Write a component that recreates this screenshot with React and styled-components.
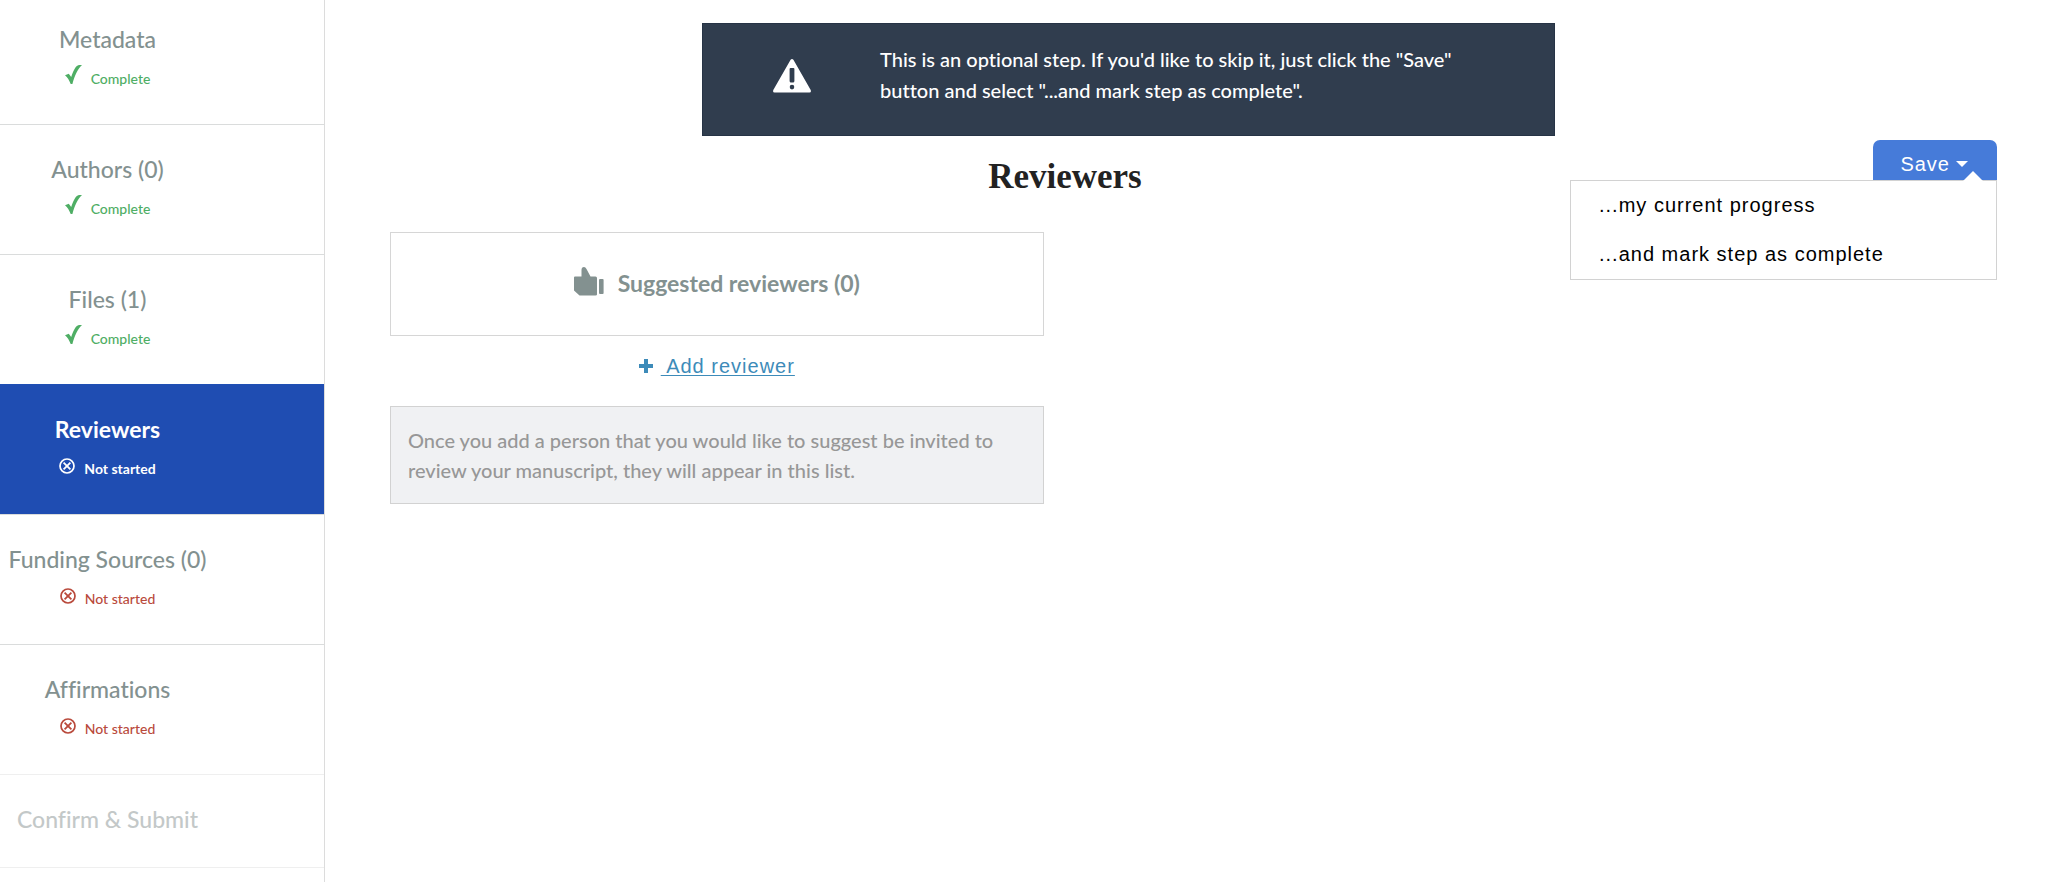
import React, { useState } from 'react'
import styled, { createGlobalStyle, css } from 'styled-components'

/* start setting styled-components */

const GlobalStyle = createGlobalStyle`
    * {
        box-sizing: border-box;
    }
    body {
        margin: 0;
        background-color: #fff;
        color: #222;
        font-family: Lato, 'Open Sans', sans-serif;
        font-variant-ligatures: none;
    }
    ul {
        list-style: none;
        margin: 0;
        padding: 0;
    }
    svg {
        flex-shrink: 0;
        fill: currentColor;
    }
`
const Page = styled.div`
    display: flex;
    min-height: 100vh;
`
const Sidebar = styled.nav`
    flex: 0 0 325px;
    border-right: 1px solid #dcdcdc;
`
const StepList = styled.ul`
    border-bottom: 1px solid #efefef;
`
const Step = styled.li`
    border-top: 1px solid ${(p) => (p.$active ? '#1f4fb4' : p.$disabled ? '#efefef' : '#dadcdc')};
    background-color: ${(p) => (p.$active ? '#1f4db2' : 'transparent')};
    font-weight: ${(p) => (p.$active ? 700 : 500)};
    &:first-child {
        border-top: 0;
    }
    &:first-child a {
        padding-top: 23px;
    }
`
const StepLink = styled.a`
    display: flex;
    flex-direction: column;
    align-items: center;
    gap: 12px;
    padding: 28px 109px 33px 0;
    color: ${(p) => (p.$active ? '#fff' : p.$disabled ? '#c3c8c8' : '#839190')};
    text-decoration: none;
    white-space: nowrap;
    ${(p) => p.$disabled && css`
        padding-bottom: 32px;
    `}
`
const StepName = styled.span`
    font-size: 23px;
    line-height: 32px;
`
const StepStatus = styled.span`
    display: flex;
    align-items: baseline;
    gap: 9px;
    height: 24px;
    font-size: 14px;
    line-height: 24px;
    color: ${(p) => (p.$active ? '#fff' : p.$done ? '#4fae65' : '#b94a3c')};
    svg {
        margin-top: -3px;
    }
`
const Main = styled.main`
    flex: 1;
    padding: 23px 0;
`
const BannerRow = styled.div`
    display: grid;
    grid-template-columns: 377fr 853fr 493fr;
`
const Banner = styled.div`
    grid-column: 2;
    display: flex;
    align-items: flex-start;
    gap: 69px;
    padding: 20px 69px 29px 70px;
    border: 1px solid #263345;
    background-color: #303d4e;
    color: #fff;
    svg {
        margin-top: 15px;
    }
`
const BannerText = styled.p`
    margin: 0;
    font-size: 20px;
    line-height: 31px;
    font-weight: 500;
`
const Content = styled.div`
    padding: 4px 51px 0 65px;
`
const HeaderRow = styled.header`
    display: grid;
    grid-template-columns: 21fr 4fr;
    height: 92px;
`
const PageTitle = styled.h1`
    margin: 17px 0 0;
    text-align: center;
    font-family: 'Liberation Serif', serif;
    font-size: 35px;
    line-height: 40px;
    font-weight: 700;
`
const SaveMenu = styled.div`
    position: relative;
    justify-self: end;
`
const SaveButton = styled.button`
    display: flex;
    align-items: center;
    gap: 6px;
    height: 48px;
    padding: 0 29px 0 27px;
    border: 0;
    border-radius: 7px;
    background-color: #467bd9;
    color: #fff;
    font-family: 'Liberation Sans', sans-serif;
    font-size: 20px;
    letter-spacing: 1px;
    cursor: pointer;
`
const Menu = styled.ul`
    position: absolute;
    top: 40px;
    right: 0;
    width: 427px;
    border: 1px solid #d2d2d2;
    background-color: #fff;
    &::before {
        content: '';
        position: absolute;
        top: -10px;
        right: 13px;
        border: 10px solid transparent;
        border-top: 0;
        border-bottom-color: #fff;
    }
`
const MenuItem = styled.button`
    display: block;
    width: 100%;
    height: 49px;
    padding: 0 28px;
    border: 0;
    background: none;
    color: #000;
    text-align: left;
    font-family: 'Liberation Sans', sans-serif;
    font-size: 20px;
    letter-spacing: 1px;
    cursor: pointer;
`
const Columns = styled.div`
    display: grid;
    grid-template-columns: 5fr 7fr;
`
const Column = styled.section`
    display: flex;
    flex-direction: column;
    padding-right: 16px;
`
const PanelTitle = styled.h2`
    display: flex;
    align-items: center;
    justify-content: center;
    gap: 14px;
    margin: 0;
    padding: 34px 16px 36px;
    border: 1px solid #d6d6d6;
    color: #839190;
    font-size: 23px;
    line-height: 32px;
    font-weight: 700;
    svg {
        margin-bottom: 3px;
    }
`
const AddLink = styled.a`
    display: flex;
    align-items: center;
    align-self: center;
    gap: 8px;
    margin: 15px 0 25px;
    color: #3d8bb9;
    font-family: 'Liberation Sans', sans-serif;
    font-size: 20px;
    line-height: 30px;
    letter-spacing: 1px;
    text-decoration: none;
`
const AddText = styled.span`
    white-space: pre;
    text-decoration: underline;
    text-decoration-thickness: 1px;
    text-underline-offset: 2px;
`
const EmptyList = styled.p`
    margin: 0;
    padding: 18px 17px;
    border: 1px solid #d2d2d2;
    background-color: #f0f1f3;
    color: #979797;
    font-size: 20px;
    line-height: 30px;
    font-weight: 500;
`
/* end setting styled-components */

const steps = [
    { name: 'Metadata', status: 'Complete' },
    { name: 'Authors (0)', status: 'Complete' },
    { name: 'Files (1)', status: 'Complete' },
    { name: 'Reviewers', status: 'Not started', active: true },
    { name: 'Funding Sources (0)', status: 'Not started' },
    { name: 'Affirmations', status: 'Not started' },
    { name: 'Confirm & Submit', disabled: true },
]

const CheckIcon = () => (
    <svg width="17" height="19" viewBox="0 0 17 19" aria-hidden="true">
        <path d="M0 10.2 3.800 8.800 6.200 12C8 6.500 10.500 .5 14 0H17C13 3.500 9.800 10 7.400 19H5.700C4.300 15.500 2.600 12.200 0 10.200Z" />
    </svg>
)

const CrossIcon = () => (
    <svg width="16" height="16" viewBox="0 0 16 16" aria-hidden="true">
        <circle cx="8" cy="8" r="7" fill="none" stroke="currentColor" strokeWidth="1.7" />
        <path d="M4.600 4.600 11.400 11.400M11.400 4.600 4.600 11.400" stroke="currentColor" strokeWidth="1.8" />
    </svg>
)

const WarningIcon = () => (
    <svg width="38" height="34" viewBox="0 0 38 34" aria-hidden="true">
        <path
            fillRule="evenodd"
            d="M17.600.8Q19-.8 20.400.8L37.700 31Q38.500 33.500 36.500 33.500H1.500Q-.5 33.500.3 31ZM17.600 9Q16.600 9 16.600 10V22Q16.600 23.500 18 23.500H20Q21.400 23.500 21.400 22V10Q21.400 9 20.400 9ZM19 25.800A2.300 2.300 0 1 0 19 30.400A2.300 2.300 0 1 0 19 25.800Z"
        />
    </svg>
)

const ThumbIcon = () => (
    <svg width="30" height="29" viewBox="0 0 30 29" aria-hidden="true">
        <path d="M1 9.500H7.500V3Q7.500 0 10 0Q11.500 0 12.500 2L16.500 9.500H21.500Q23 9.500 23 11V27.500Q23 28.500 21.500 28.500H5.500L0 23.500V10.500Q0 9.500 1 9.500Z" />
        <rect x="25" y="12" width="4.600" height="15" rx="1" />
    </svg>
)

const App = () => {
    const [open, setOpen] = useState(true)

    const OneStep = (step) => {
        const done = step.status === 'Complete'
        return (
            <Step key={step.name} $active={step.active} $disabled={step.disabled}>
                <StepLink href="#" $active={step.active} $disabled={step.disabled}>
                    <StepName>{step.name}</StepName>
                    {step.status && (
                        <StepStatus $active={step.active} $done={done}>
                            {done ? <CheckIcon /> : <CrossIcon />}
                            {step.status}
                        </StepStatus>
                    )}
                </StepLink>
            </Step>
        )
    }

    return (
        <Page>
            <GlobalStyle />
            <Sidebar>
                <StepList>{steps.map(OneStep)}</StepList>
            </Sidebar>
            <Main>
                <BannerRow>
                    <Banner>
                        <WarningIcon />
                        <BannerText>
                            This is an optional step. If you'd like to skip it, just click the "Save" button and select "...and mark step as complete".
                        </BannerText>
                    </Banner>
                </BannerRow>
                <Content>
                    <HeaderRow>
                        <PageTitle>Reviewers</PageTitle>
                        <SaveMenu>
                            <SaveButton type="button" aria-expanded={open} onClick={() => setOpen(!open)}>
                                Save
                                <svg width="12" height="6" viewBox="0 0 12 6" aria-hidden="true">
                                    <path d="M0 0H12L6 6Z" />
                                </svg>
                            </SaveButton>
                            {open && (
                                <Menu>
                                    <li><MenuItem type="button">...my current progress</MenuItem></li>
                                    <li><MenuItem type="button">...and mark step as complete</MenuItem></li>
                                </Menu>
                            )}
                        </SaveMenu>
                    </HeaderRow>
                    <Columns>
                        <Column>
                            <PanelTitle>
                                <ThumbIcon />
                                Suggested reviewers (0)
                            </PanelTitle>
                            <AddLink href="#">
                                <svg width="14" height="14" viewBox="0 0 14 14" aria-hidden="true">
                                    <path d="M5 0H9V5H14V9H9V14H5V9H0V5H5Z" />
                                </svg>
                                <AddText> Add reviewer</AddText>
                            </AddLink>
                            <EmptyList>
                                Once you add a person that you would like to suggest be invited to review your manuscript, they will appear in this list.
                            </EmptyList>
                        </Column>
                    </Columns>
                </Content>
            </Main>
        </Page>
    )
}

export default App
